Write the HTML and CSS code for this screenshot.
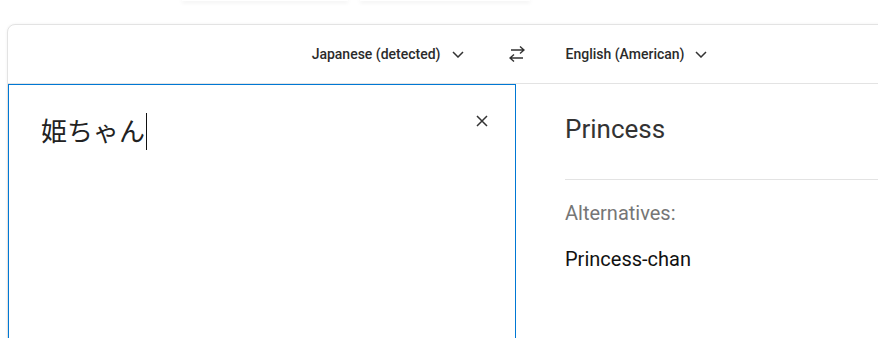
FILE: index.html
```html
<!DOCTYPE html>
<html lang="en">
	<head>
		<meta charset="UTF-8" />
		<meta name="viewport" content="width=device-width, initial-scale=1.0" />
		<title>Translator</title>
		<link rel="stylesheet" href="styles.css">
	</head>
	<body>
		<div class="tabs">
			<div class="tab"></div>
			<div class="tab"></div>
		</div>

		<div class="card">
			<div class="lang-bar">
				<button class="lang-btn lang-from">
					Japanese (detected)
					<svg class="chevron" viewBox="0 0 12 7" width="12" height="7">
						<path d="M1 1l5 5 5-5" />
					</svg>
				</button>
				<button class="swap-btn" title="Swap languages">
					<svg viewBox="0 0 16 16" width="16" height="16">
						<path d="M2 4h13M11 0.5l4 3.5-4 3.5" />
						<path d="M14 12H1M5 8.5l-4 3.5 4 3.5" />
					</svg>
				</button>
				<button class="lang-btn lang-to">
					English (American)
					<svg class="chevron" viewBox="0 0 12 7" width="12" height="7">
						<path d="M1 1l5 5 5-5" />
					</svg>
				</button>
			</div>

			<div class="panes">
				<div class="source-pane">
					<div class="source-text">姫ちゃん<span class="caret"></span></div>
					<button class="clear-btn" title="Clear">
						<svg viewBox="0 0 12 12" width="12" height="12">
							<path d="M1 1l10 10M11 1L1 11" />
						</svg>
					</button>
				</div>

				<div class="target-pane">
					<div class="target-text">Princess</div>
					<div class="divider"></div>
					<div class="alt-label">Alternatives:</div>
					<div class="alt-item">Princess-chan</div>
				</div>
			</div>
		</div>
	</body>
</html>
```

FILE: styles.css
```css
* {
	margin: 0;
	padding: 0;
	box-sizing: border-box;
}

body {
	font-family: Roboto, 'Noto Sans', sans-serif;
	background: #fff;
	color: #333;
	overflow: hidden;
	height: 338px;
}

button {
	font: inherit;
	background: none;
	border: none;
	color: inherit;
	cursor: pointer;
}

.tabs {
	display: flex;
	gap: 12px;
	height: 1px;
	padding-left: 182px;
}

.tab {
	width: 166px;
	height: 1px;
	background: #fff;
	box-shadow: 0 1px 4px rgba(0, 0, 0, 0.18);
}

.tab + .tab {
	width: 170px;
}

.card {
	width: 1018px;
	margin: 23px 0 0 7px;
	border: 1px solid #e3e3e3;
	border-radius: 8px 8px 0 0;
	box-shadow: 0 0 3px rgba(0, 0, 0, 0.06);
	background: #fff;
}

.lang-bar {
	display: grid;
	grid-template-columns: 1fr auto 1fr;
	align-items: center;
	height: 59px;
	border-bottom: 1px solid #e3e3e3;
}

.lang-btn {
	display: flex;
	align-items: center;
	gap: 10px;
	font-size: 14px;
	font-weight: 500;
	color: #2b2b2b;
}

.lang-from {
	justify-self: end;
	gap: 11px;
	padding-right: 3px;
}

.lang-to {
	justify-self: start;
}

.chevron {
	fill: none;
	stroke: #333;
	stroke-width: 1.5;
}

.swap-btn {
	display: flex;
	margin: 0 41px 0 42px;
}

.swap-btn svg {
	fill: none;
	stroke: #333;
	stroke-width: 1.4;
}

.panes {
	display: grid;
	grid-template-columns: 1fr 1fr;
	height: 260px;
}

.source-pane {
	position: relative;
	border: 1px solid #0078d4;
	padding: 22px 32px;
}

.source-text {
	font-family: 'Noto Sans CJK JP', sans-serif;
	font-size: 26px;
	line-height: 46px;
	color: #222;
}

.caret {
	display: inline-block;
	width: 1px;
	height: 37px;
	background: #111;
	margin-left: 1px;
	vertical-align: -9px;
}

.clear-btn {
	position: absolute;
	top: 30px;
	right: 27px;
	display: flex;
}

.clear-btn svg {
	fill: none;
	stroke: #333;
	stroke-width: 1.5;
}

.target-pane {
	padding: 24px 0 0 49px;
}

.target-text {
	font-size: 26px;
	line-height: 42px;
	color: #333;
}

.divider {
	height: 1px;
	background: #e3e3e3;
	margin: 29px 0 20px;
}

.alt-label {
	font-size: 20px;
	line-height: 26px;
	color: #767676;
}

.alt-item {
	font-size: 20px;
	line-height: 26px;
	color: #111;
	margin-top: 20px;
}
```
